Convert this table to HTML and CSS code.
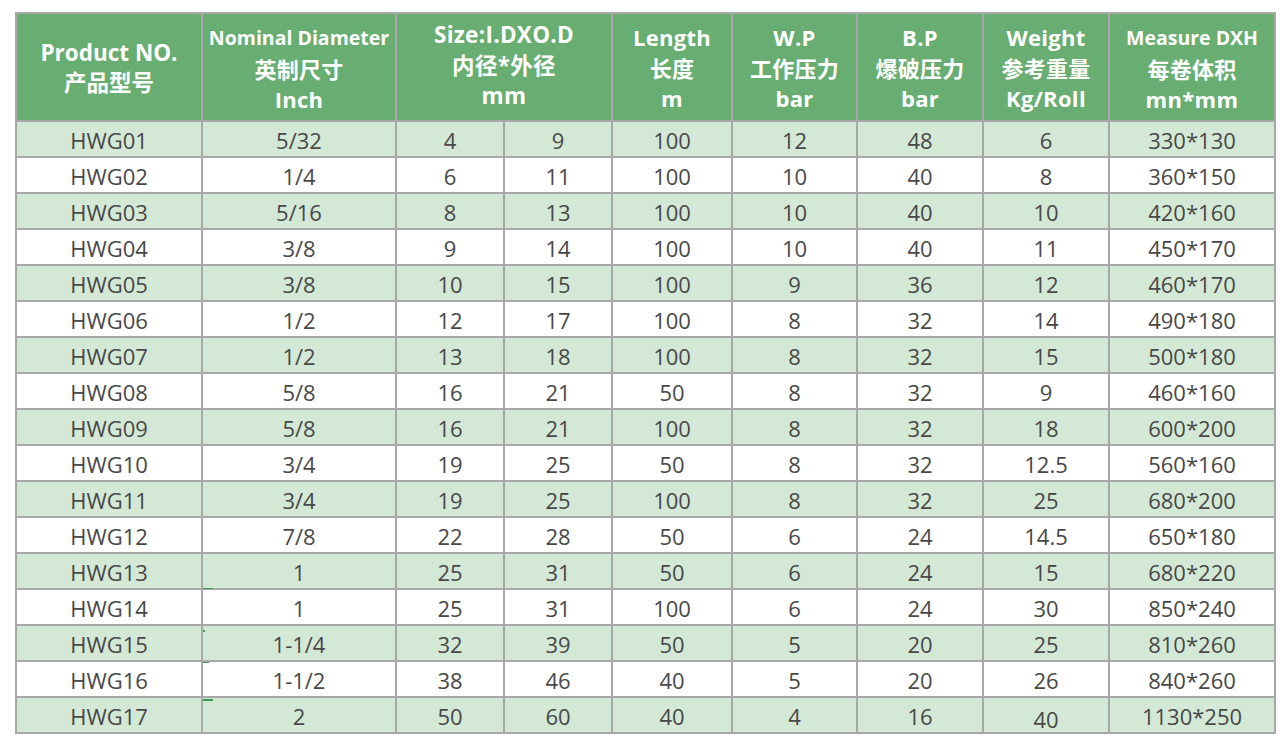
FILE: index.html
```html
<!DOCTYPE html>
<html lang="zh">
<head>
<meta charset="utf-8">
<title>HWG</title>
<link rel="stylesheet" href="styles.css">
</head>
<body>
<table class="spec">
  <colgroup>
    <col class="c1"><col class="c2"><col class="c3"><col class="c4"><col class="c5"><col class="c6"><col class="c7"><col class="c8"><col class="c9">
  </colgroup>
  <thead>
    <tr>
      <th class="big">Product NO.<br>产品型号</th>
      <th><span class="sm">Nominal Diameter</span><br>英制尺寸<br>Inch</th>
      <th colspan="2"><span class="up">Size:I.DXO.D<br>内径*外径<br>mm</span></th>
      <th>Length<br>长度<br>m</th>
      <th>W.P<br>工作压力<br>bar</th>
      <th>B.P<br>爆破压力<br>bar</th>
      <th>Weight<br>参考重量<br>Kg/Roll</th>
      <th><span class="sm">Measure DXH</span><br>每卷体积<br>mn*mm</th>
    </tr>
  </thead>
  <tbody>
    <tr><td>HWG01</td><td>5/32</td><td>4</td><td>9</td><td>100</td><td>12</td><td>48</td><td>6</td><td>330*130</td></tr>
    <tr><td>HWG02</td><td>1/4</td><td>6</td><td>11</td><td>100</td><td>10</td><td>40</td><td>8</td><td>360*150</td></tr>
    <tr><td>HWG03</td><td>5/16</td><td>8</td><td>13</td><td>100</td><td>10</td><td>40</td><td>10</td><td>420*160</td></tr>
    <tr><td>HWG04</td><td>3/8</td><td>9</td><td>14</td><td>100</td><td>10</td><td>40</td><td>11</td><td>450*170</td></tr>
    <tr><td>HWG05</td><td>3/8</td><td>10</td><td>15</td><td>100</td><td>9</td><td>36</td><td>12</td><td>460*170</td></tr>
    <tr><td>HWG06</td><td>1/2</td><td>12</td><td>17</td><td>100</td><td>8</td><td>32</td><td>14</td><td>490*180</td></tr>
    <tr><td>HWG07</td><td>1/2</td><td>13</td><td>18</td><td>100</td><td>8</td><td>32</td><td>15</td><td>500*180</td></tr>
    <tr><td>HWG08</td><td>5/8</td><td>16</td><td>21</td><td>50</td><td>8</td><td>32</td><td>9</td><td>460*160</td></tr>
    <tr><td>HWG09</td><td>5/8</td><td>16</td><td>21</td><td>100</td><td>8</td><td>32</td><td>18</td><td>600*200</td></tr>
    <tr><td>HWG10</td><td>3/4</td><td>19</td><td>25</td><td>50</td><td>8</td><td>32</td><td>12.5</td><td>560*160</td></tr>
    <tr><td>HWG11</td><td>3/4</td><td>19</td><td>25</td><td>100</td><td>8</td><td>32</td><td>25</td><td>680*200</td></tr>
    <tr><td>HWG12</td><td>7/8</td><td>22</td><td>28</td><td>50</td><td>6</td><td>24</td><td>14.5</td><td>650*180</td></tr>
    <tr><td>HWG13</td><td>1</td><td>25</td><td>31</td><td>50</td><td>6</td><td>24</td><td>15</td><td>680*220</td></tr>
    <tr><td>HWG14</td><td class="mark m1">1</td><td>25</td><td>31</td><td>100</td><td>6</td><td>24</td><td>30</td><td>850*240</td></tr>
    <tr><td>HWG15</td><td class="mark m2">1-1/4</td><td>32</td><td>39</td><td>50</td><td>5</td><td>20</td><td>25</td><td>810*260</td></tr>
    <tr><td>HWG16</td><td class="mark m3">1-1/2</td><td>38</td><td>46</td><td>40</td><td>5</td><td>20</td><td>26</td><td>840*260</td></tr>
    <tr><td>HWG17</td><td class="mark m4">2</td><td>50</td><td>60</td><td>40</td><td>4</td><td>16</td><td><span class="low">40</span></td><td>1130*250</td></tr>
  </tbody>
</table>
</body>
</html>
```
FILE: styles.css
```css
html, body {
  margin: 0;
  padding: 0;
  background: #ffffff;
}
body {
  padding: 12px 0 0 15px;
  font-family: "Open Sans", "Noto Sans CJK SC", sans-serif;
}
.spec {
  border-collapse: collapse;
  table-layout: fixed;
  width: 1261px;
  border: 2px solid #a8a8a8;
}
.c1 { width: 186px; }
.c2 { width: 194px; }
.c3 { width: 108px; }
.c4 { width: 108px; }
.c5 { width: 120px; }
.c6 { width: 125px; }
.c7 { width: 126px; }
.c8 { width: 126px; }
.c9 { width: 166px; }
.spec th, .spec td {
  border: 2px solid #a8a8a8;
  text-align: center;
  padding: 0;
}
.spec th {
  background: #68ad71;
  color: #ffffff;
  font-weight: 700;
  font-size: 22px;
  letter-spacing: 0.3px;
  line-height: 30.5px;
  height: 104px;
  padding-top: 2px;
  vertical-align: middle;
  font-family: "Open Sans", "Noto Sans CJK SC", sans-serif;
}
.spec th.big {
  font-size: 22.5px;
  letter-spacing: 0;
}
.spec th .sm {
  font-size: 19.5px;
  letter-spacing: 0;
}
.spec th .up {
  display: block;
  margin-top: -4px;
  font-size: 22.5px;
}
.spec td {
  height: 32px;
  padding-top: 2px;
  font-size: 22px;
  color: #484848;
  line-height: 32px;
}
.spec tbody tr:nth-child(odd) td {
  background: #d4e8d6;
}
.spec tbody tr:nth-child(even) td {
  background: #ffffff;
}
.low {
  display: inline-block;
  transform: translateY(3px);
}
.mark {
  position: relative;
}
.mark::before {
  content: "";
  position: absolute;
  background: #3a9a55;
}
.m1::before { left: 0; top: -2px; width: 10px; height: 1px; }
.m2::before { left: 0; top: 4px; width: 2px; height: 2px; }
.m3::before { left: 0; top: 0; width: 6px; height: 1px; }
.m4::before { left: 0; top: 1px; width: 10px; height: 2px; }
```
